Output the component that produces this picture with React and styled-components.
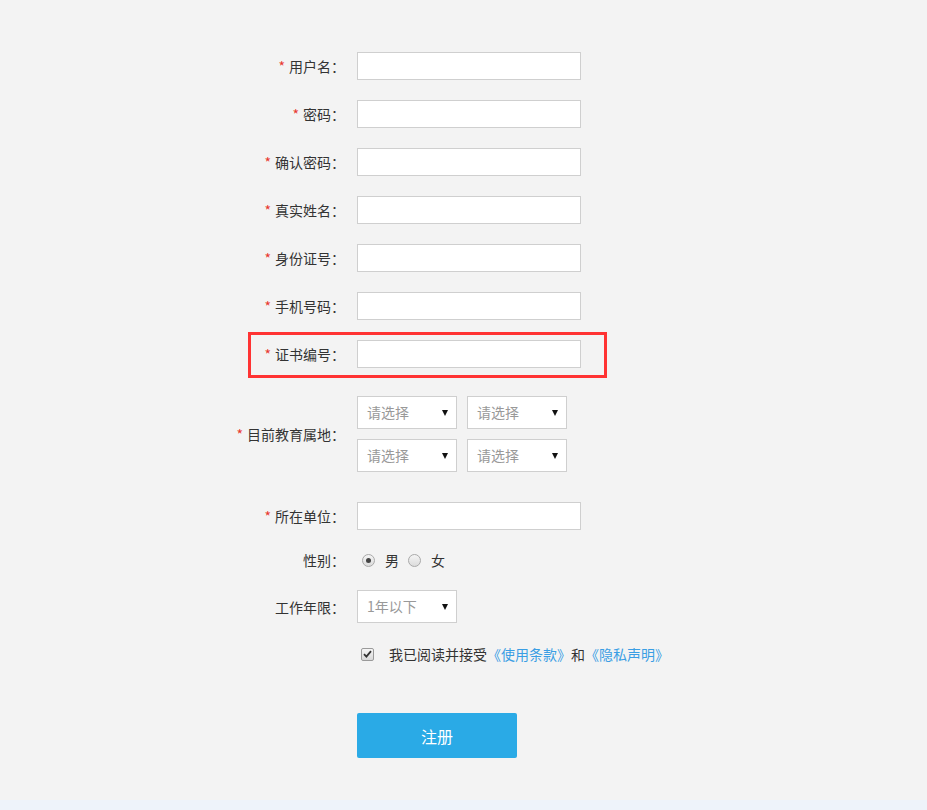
import React from 'react'
import styled, { createGlobalStyle } from 'styled-components'

const GlobalStyle = createGlobalStyle`
  html, body {
    margin: 0;
    padding: 0;
    background: #eef3fa;
  }
  *, *::before, *::after {
    box-sizing: border-box;
  }
`

const Page = styled.div`
  min-height: 800px;
  background: #f3f3f3;
  padding-top: 52px;
  font-family: "Noto Sans CJK SC", "Noto Sans", sans-serif;
  font-size: 14px;
  color: #333;
`

const Form = styled.form`
  display: flex;
  flex-direction: column;
  margin-left: 145px;
  width: 560px;
`

const Row = styled.div`
  position: relative;
  display: flex;
  align-items: center;
  gap: 12px;
  min-height: 28px;
  margin-bottom: ${p => p.$gap ?? 20}px;

  ${p => p.$marked && `
    &::after {
      content: "";
      position: absolute;
      left: 103px;
      top: -8px;
      width: 359px;
      height: 46px;
      border: 3px solid #ff3333;
      pointer-events: none;
    }
  `}
`

const Label = styled.label`
  width: 200px;
  flex-shrink: 0;
  text-align: right;
  line-height: 28px;
  color: #333;
  white-space: nowrap;
`

const Star = styled.span`
  color: #e8382f;
  margin-right: 4px;
`

const Input = styled.input`
  width: 224px;
  height: 28px;
  border: 1px solid #cfcfcf;
  background: #fff;
  padding: 0 8px;
  font: inherit;
  outline: none;
`

const SelectGrid = styled.div`
  display: grid;
  grid-template-columns: 100px 100px;
  gap: 10px;
`

const Select = styled.div`
  position: relative;
  width: 100px;
  height: 33px;
  border: 1px solid #cfcfcf;
  background: #fff;
  padding-left: 9px;
  line-height: 31px;
  color: #999;

  &::after {
    content: "";
    position: absolute;
    right: 8px;
    top: 13px;
    border-left: 3.5px solid transparent;
    border-right: 3.5px solid transparent;
    border-top: 6px solid #111;
  }
`

const Options = styled.div`
  display: flex;
  align-items: center;
  height: 28px;
  white-space: nowrap;
`

const Radio = styled.span`
  display: inline-block;
  width: 13px;
  height: 13px;
  border-radius: 50%;
  border: 1px solid #a9a9a9;
  background: linear-gradient(#f4f4f4, #dcdcdc);
  margin-left: 5px;
  margin-right: 10px;
  position: relative;

  ${p => p.$checked && `
    &::after {
      content: "";
      position: absolute;
      left: 3px;
      top: 3px;
      width: 5px;
      height: 5px;
      border-radius: 50%;
      background: #444;
    }
  `}
`

const OptionText = styled.span`
  margin-right: 4px;
`

const Check = styled.span`
  display: inline-flex;
  align-items: center;
  justify-content: center;
  width: 13px;
  height: 13px;
  border: 1px solid #9a9a9a;
  border-radius: 2px;
  background: linear-gradient(#f6f6f6, #d8d8d8);
  margin-left: 4px;
  margin-right: 15px;
`

const Link = styled.a`
  color: #3a9ee4;
  text-decoration: none;
`

const Submit = styled.button`
  width: 160px;
  height: 45px;
  border: none;
  border-radius: 2px;
  background: #2aaae6;
  color: #fff;
  font: inherit;
  font-size: 16px;
  cursor: pointer;
`

const fields = [
  { label: '用户名' },
  { label: '密码' },
  { label: '确认密码' },
  { label: '真实姓名' },
  { label: '身份证号' },
  { label: '手机号码' },
  { label: '证书编号', marked: true, gap: 28 },
]

const App = () => {
  return (
    <Page>
      <GlobalStyle />
      <Form onSubmit={e => e.preventDefault()}>
        {fields.map(f => (
          <Row key={f.label} $marked={f.marked} $gap={f.gap}>
            <Label><Star>*</Star>{f.label}：</Label>
            <Input type="text" />
          </Row>
        ))}

        <Row $gap={30}>
          <Label><Star>*</Star>目前教育属地：</Label>
          <SelectGrid>
            <Select>请选择</Select>
            <Select>请选择</Select>
            <Select>请选择</Select>
            <Select>请选择</Select>
          </SelectGrid>
        </Row>

        <Row $gap={16}>
          <Label><Star>*</Star>所在单位：</Label>
          <Input type="text" />
        </Row>

        <Row $gap={16}>
          <Label>性别：</Label>
          <Options>
            <Radio $checked />
            <OptionText>男</OptionText>
            <Radio />
            <OptionText>女</OptionText>
          </Options>
        </Row>

        <Row $gap={17}>
          <Label>工作年限：</Label>
          <Select>1年以下</Select>
        </Row>

        <Row $gap={45}>
          <Label />
          <Options>
            <Check>
              <svg width="9" height="8" viewBox="0 0 9 8">
                <path d="M1 4.2 L3.4 6.6 L8 1.2" fill="none" stroke="#333" strokeWidth="1.8" />
              </svg>
            </Check>
            <span>我已阅读并接受<Link href="#">《使用条款》</Link>和<Link href="#">《隐私声明》</Link></span>
          </Options>
        </Row>

        <Row>
          <Label />
          <Submit type="submit">注册</Submit>
        </Row>
      </Form>
    </Page>
  )
}

export default App
